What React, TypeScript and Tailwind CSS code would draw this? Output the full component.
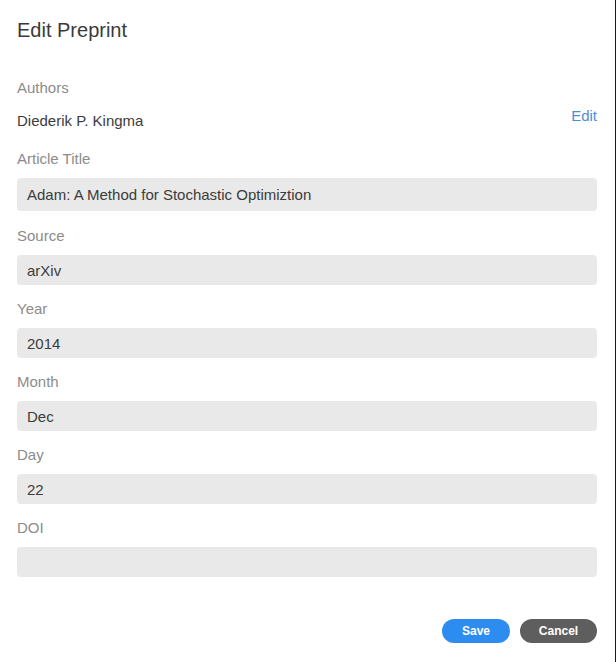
import React from "react";

const fields: { label: string; value: string }[] = [
  { label: "Source", value: "arXiv" },
  { label: "Year", value: "2014" },
  { label: "Month", value: "Dec" },
  { label: "Day", value: "22" },
  { label: "DOI", value: "" },
];

export default function App() {
  return (
    <div
      className="w-[616px] h-[662px] bg-white flex"
      style={{ fontFamily: '"Liberation Sans", Arial, sans-serif' }}
    >
      <div className="w-[615px] h-full pl-[17px] pr-[18px] pt-[16px] flex flex-col">
        <h1 className="text-[20px] leading-[28px] text-[#3a3a3a] font-normal">Edit Preprint</h1>

        <div className="mt-[34px] text-[15px] leading-[20px] text-[#8c8c8c]">Authors</div>
        <div className="mt-[8px] flex justify-between items-start">
          <span className="mt-[5px] text-[15px] leading-[20px] text-[#3c3c3c]">Diederik P. Kingma</span>
          <span className="text-[15px] leading-[20px] text-[#4a8fd6]">Edit</span>
        </div>

        <div className="mt-[18px] text-[15px] leading-[20px] text-[#8c8c8c]">Article Title</div>
        <div className="mt-[9px] h-[33px] rounded-[4px] bg-[#e9e9e9] flex items-center pl-[10px] pt-[2px] text-[15px] text-[#3c3c3c]">
          Adam: A Method for Stochastic Optimiztion
        </div>

        {fields.map((f, i) => (
          <div key={f.label} className={i === 0 ? "mt-[15px]" : "mt-[14px]"}>
            <div className="text-[15px] leading-[20px] text-[#8c8c8c]">{f.label}</div>
            <div className="mt-[9px] h-[30px] rounded-[4px] bg-[#e9e9e9] flex items-center pl-[10px] pt-[2px] text-[15px] text-[#3c3c3c]">
              {f.value}
            </div>
          </div>
        ))}

        <div className="mt-[42px] flex justify-end gap-[10px]">
          <button className="w-[68px] h-[24px] rounded-full bg-[#2d8cf0] text-white text-[12px] font-bold">
            Save
          </button>
          <button className="w-[77px] h-[24px] rounded-full bg-[#5e5e5e] text-white text-[12px] font-bold">
            Cancel
          </button>
        </div>
      </div>
      <div className="w-[1px] h-full bg-[#1a1a1a]" />
    </div>
  );
}
